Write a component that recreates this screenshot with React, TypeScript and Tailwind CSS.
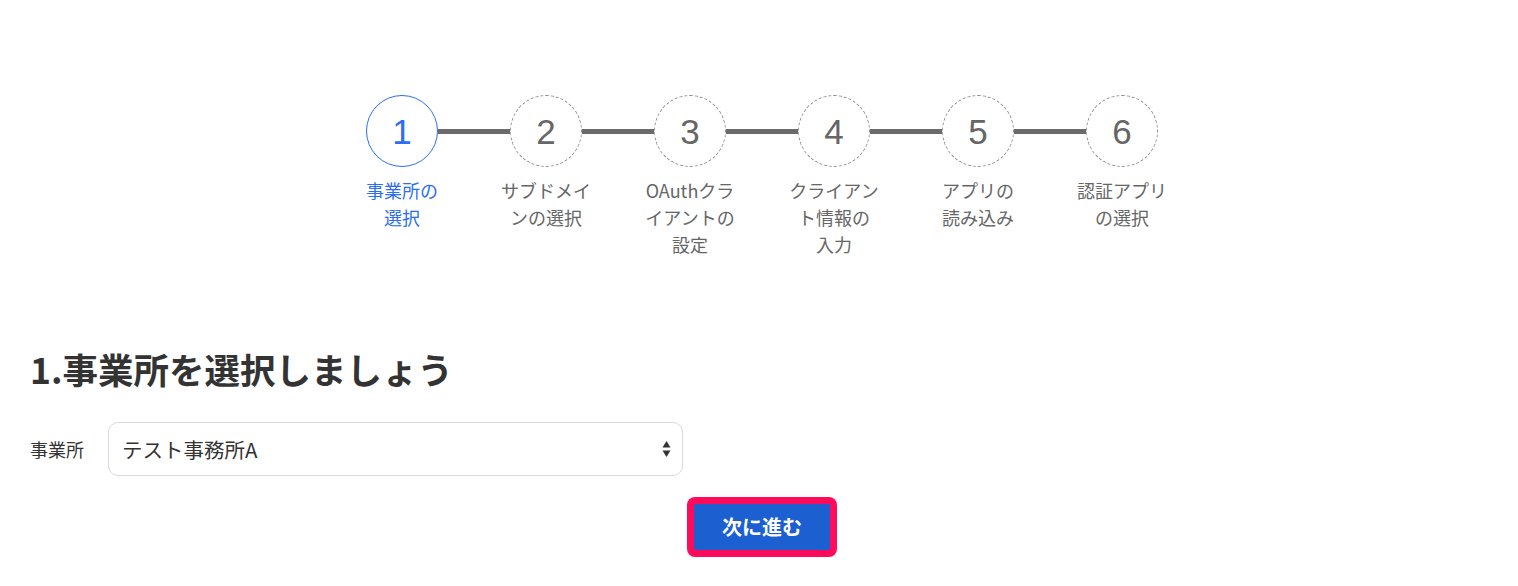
import React from "react";

const steps = [
  { n: "1", label: ["事業所の", "選択"] },
  { n: "2", label: ["サブドメイ", "ンの選択"] },
  { n: "3", label: ["OAuthクラ", "イアントの", "設定"] },
  { n: "4", label: ["クライアン", "ト情報の", "入力"] },
  { n: "5", label: ["アプリの", "読み込み"] },
  { n: "6", label: ["認証アプリ", "の選択"] },
];

const jp = { fontFamily: '"Noto Sans CJK JP", "Noto Sans", sans-serif' };

export default function App() {
  return (
    <div
      className="w-[1518px] h-[586px] bg-white pl-[30px] pr-[24px] pt-[95px] overflow-hidden"
      style={jp}
    >
      <div className="flex justify-center">
        {steps.map((s, i) => (
          <React.Fragment key={s.n}>
            <div className="w-[72px] shrink-0 flex flex-col items-center">
              <div
                className={
                  i === 0
                    ? "w-[72px] h-[72px] rounded-full border border-[#2b6ef2] flex items-center justify-center text-[#2b6ef2]"
                    : "w-[72px] h-[72px] rounded-full border border-dashed border-[#8a8a8a] flex items-center justify-center text-[#666666]"
                }
              >
                <span
                  className="text-[35px] leading-none"
                  style={{ fontFamily: '"Liberation Sans", Arial, sans-serif' }}
                >
                  {s.n}
                </span>
              </div>
              <div
                className={
                  "mt-[10px] w-[96px] shrink-0 text-center text-[18px] leading-[27px] " +
                  (i === 0 ? "text-[#2b6ef2]" : "text-[#666666]")
                }
              >
                {s.label.map((l) => (
                  <div key={l} className="whitespace-nowrap">
                    {l}
                  </div>
                ))}
              </div>
            </div>
            {i < steps.length - 1 && (
              <div className="w-[72px] h-[5px] mt-[34px] bg-[#6b6b6b] shrink-0" />
            )}
          </React.Fragment>
        ))}
      </div>

      <h1 className="mt-[84px] text-[35.5px] leading-[54px] font-bold text-[#333333]">
        1.事業所を選択しましょう
      </h1>

      <div className="mt-[26px] flex items-center">
        <div className="w-[78px] text-[18px] text-[#333333]">事業所</div>
        <div className="w-[575px] h-[54px] rounded-[10px] border border-[#d9d9d9] flex items-center justify-between pl-[13px] pr-[11px]">
          <span className="text-[20.5px] text-[#333333]">テスト事務所A</span>
          <svg width="9" height="18" viewBox="0 0 9 18">
            <polygon points="4.5,1 8.5,7.5 0.5,7.5" fill="#333" />
            <polygon points="0.5,10.5 8.5,10.5 4.5,17" fill="#333" />
          </svg>
        </div>
      </div>

      <div className="mt-[21px] flex justify-center">
        <div className="p-[7px] bg-[#fe0b5b] rounded-[8px]">
          <div className="w-[136px] h-[46px] bg-[#1b5fd1] rounded-[2px] flex items-center justify-center text-white text-[20px] font-bold">
            次に進む
          </div>
        </div>
      </div>
    </div>
  );
}
